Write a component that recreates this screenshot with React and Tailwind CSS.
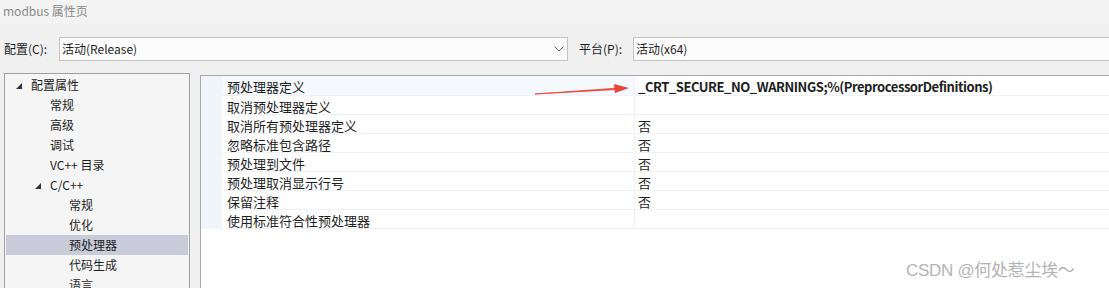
import React from "react";

const font = { fontFamily: '"Noto Sans CJK SC", "Noto Sans", sans-serif' };

const tree = [
  { label: "配置属性", indent: 30, arrow: 15 },
  { label: "常规", indent: 49 },
  { label: "高级", indent: 49 },
  { label: "调试", indent: 49 },
  { label: "VC++ 目录", indent: 49 },
  { label: "C/C++", indent: 49, arrow: 34 },
  { label: "常规", indent: 68 },
  { label: "优化", indent: 68 },
  { label: "预处理器", indent: 68, selected: true },
  { label: "代码生成", indent: 68 },
  { label: "语言", indent: 68 },
];

const props = [
  { name: "预处理器定义", value: "_CRT_SECURE_NO_WARNINGS;%(PreprocessorDefinitions)", bold: true },
  { name: "取消预处理器定义", value: "" },
  { name: "取消所有预处理器定义", value: "否" },
  { name: "忽略标准包含路径", value: "否" },
  { name: "预处理到文件", value: "否" },
  { name: "预处理取消显示行号", value: "否" },
  { name: "保留注释", value: "否" },
  { name: "使用标准符合性预处理器", value: "" },
];

const Chevron = () => (
  <svg width="10" height="6" viewBox="0 0 10 6" className="text-[#606060]">
    <path d="M0.5 0.5 L5 5 L9.5 0.5" fill="none" stroke="currentColor" strokeWidth="1" />
  </svg>
);

export default function App() {
  return (
    <div className="relative w-[1109px] h-[288px] overflow-hidden bg-[#f0f0f0] text-[#1e1e1e]" style={font}>
      <div className="h-[24px] bg-[#f3f3f3] pl-[3px] text-[12px] leading-[22px] text-[#8a8a8a]">modbus 属性页</div>

      <div className="flex items-center h-[24px] mt-[13px] text-[12px]">
        <span className="w-[59px] pl-[4px]">配置(C):</span>
        <div className="flex items-center justify-between w-[509px] h-[24px] bg-[#fcfcfc] border border-[#c4c4c4] pl-[2px] pr-[3px]">
          <span>活动(Release)</span>
          <Chevron />
        </div>
        <span className="w-[65px] pl-[11px]">平台(P):</span>
        <div className="flex items-center flex-1 h-[24px] bg-[#fcfcfc] border border-[#c4c4c4] border-r-0 pl-[2px]">
          <span>活动(x64)</span>
        </div>
      </div>

      <div className="flex mt-[12px] h-[215px]">
        <div className="ml-[4px] w-[186px] border border-b-0 border-[#a0a0a0] bg-[#f5f5f5] pt-[1px] text-[12px]">
          {tree.map((t, i) => (
            <div
              key={i}
              className={`relative h-[20px] leading-[20px] mx-[1px] ${t.selected ? "bg-[#c9cbd8]" : ""}`}
            >
              {t.arrow !== undefined && (
                <span
                  className="absolute top-[8px] w-0 h-0 border-l-[6px] border-l-transparent border-b-[6px] border-b-[#333]"
                  style={{ left: t.arrow - 5 }}
                />
              )}
              <span className="absolute" style={{ left: t.indent - 5 }}>{t.label}</span>
            </div>
          ))}
        </div>

        <div className="ml-[10px] flex-1 border-t border-l border-[#a8a8a8] bg-white mt-[2px]">
          <div className="flex">
            <div className="w-[21px] h-[153px] bg-[#f0f4fb]" />
            <div className="flex-1">
              {props.map((p, i) => (
                <div key={i} className={`flex h-[19px] border-b border-[#eef1f7] text-[13px] leading-[18px] ${i === 0 ? "bg-[#f5f8fc] h-[20px]" : ""}`}>
                  <div className="w-[413px] pl-[5px] pt-[2px] border-r border-[#eef1f7]">{p.name}</div>
                  <div className={`pl-[3px] pt-[2px] flex-1 ${i === 0 ? "bg-white" : ""} ${p.bold ? "font-bold tracking-[-0.45px]" : ""}`}>{p.value}</div>
                </div>
              ))}
            </div>
          </div>
        </div>
      </div>

      <svg className="absolute left-[530px] top-[80px]" width="104" height="18" viewBox="0 0 104 18">
        <path d="M5 14 L86 8.2 L86 9.6 Z" fill="#e8453c" stroke="#e8453c" strokeWidth="0.8" />
        <path d="M84 4 L99 8 L85 13 Z" fill="#e8453c" />
      </svg>

      <div
        className="absolute left-[906px] top-[258px] text-[17px] text-[#b4b4b4] tracking-[-0.3px]"
        style={{ fontFamily: '"Liberation Sans", "Noto Sans CJK SC", sans-serif' }}
      >
        CSDN @何处惹尘埃～
      </div>
    </div>
  );
}
